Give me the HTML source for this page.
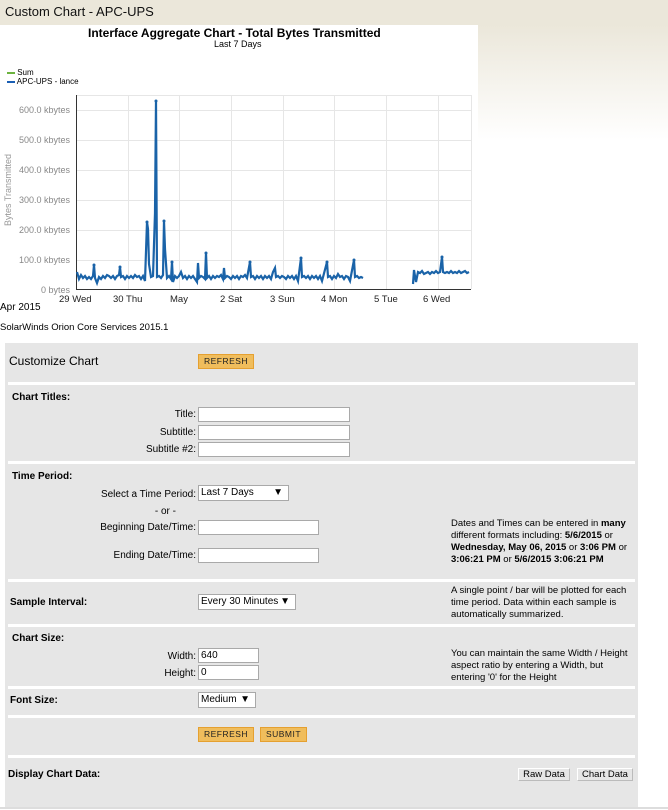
<!DOCTYPE html>
<html><head><meta charset="utf-8"><style>
*{margin:0;padding:0;box-sizing:border-box}
body{width:668px;height:810px;position:relative;font-family:"Liberation Sans",Arial,sans-serif;font-size:10px;color:#000;background:#fff;overflow:hidden}
.bg{position:absolute;left:0;top:0;width:668px;height:145px;background:linear-gradient(#ebe7da,#ebe7da 25px,#fff 140px)}
.hdr{position:absolute;left:5px;top:4px;font-size:13px;color:#111}
.chart{position:absolute;left:0;top:25px;width:478px;height:270px;background:#fff}
.a{position:absolute;white-space:nowrap}
.panel{position:absolute;left:5px;top:343px;width:633px;height:464px;background:#e6e6e6}
.sep{position:absolute;left:3px;width:627px;height:3px;background:#fff}
.in{position:absolute;height:15px;background:#fff;border:1px solid #a9a9a9;font-size:10px;padding-left:2px;line-height:13px}
.btn{position:absolute;height:15px;background:#f0bd5c;border:1px solid #e5a030;font-size:8.5px;letter-spacing:.5px;text-align:center;line-height:13px;color:#222}
.lab{position:absolute;text-align:right;width:188px;left:3px}
.b{font-weight:bold}
.gb{position:absolute;height:13px;background:#e6e6e6;border:1px solid #bbb;border-top-color:#fff;border-left-color:#fff;font-size:9.5px;text-align:center;line-height:11px}
.txt{position:absolute;left:446px;font-size:9.5px;line-height:12px;white-space:normal;width:188px}
</style></head><body>
<div class="bg"></div>
<div class="hdr">Custom Chart - APC-UPS</div>
<div class="chart"></div>
<div class="a b" style="left:88px;top:26px;font-size:12px">Interface Aggregate Chart - Total Bytes Transmitted</div>
<div class="a" style="left:214px;top:39px;font-size:9px">Last 7 Days</div>
<div class="a" style="left:7px;top:68px;font-size:8px"><span style="display:inline-block;width:8px;height:2px;background:#6cb33f;vertical-align:middle"></span> Sum</div>
<div class="a" style="left:7px;top:77px;font-size:8px"><span style="display:inline-block;width:8px;height:2px;background:#1a5fb4;vertical-align:middle"></span> APC-UPS - lance</div>
<div class="a" style="left:-28px;top:185px;font-size:9px;color:#999;transform:rotate(-90deg)">Bytes Transmitted</div>
<svg class="a" style="left:0;top:0" width="480" height="310">
<g stroke="#e6e6e6" stroke-width="1">
<line x1="76" y1="110.5" x2="471" y2="110.5"/><line x1="76" y1="140.5" x2="471" y2="140.5"/><line x1="76" y1="170.5" x2="471" y2="170.5"/><line x1="76" y1="200.5" x2="471" y2="200.5"/><line x1="76" y1="230.5" x2="471" y2="230.5"/><line x1="76" y1="260.5" x2="471" y2="260.5"/>
<line x1="76" y1="95.5" x2="471" y2="95.5"/>
<line x1="128.5" y1="95" x2="128.5" y2="289"/><line x1="179.5" y1="95" x2="179.5" y2="289"/><line x1="231.5" y1="95" x2="231.5" y2="289"/><line x1="283.5" y1="95" x2="283.5" y2="289"/><line x1="334.5" y1="95" x2="334.5" y2="289"/><line x1="386.5" y1="95" x2="386.5" y2="289"/><line x1="438.5" y1="95" x2="438.5" y2="289"/><line x1="471.5" y1="95" x2="471.5" y2="289"/>
</g>
<line x1="76.5" y1="95" x2="76.5" y2="290" stroke="#333"/>
<line x1="76" y1="289.5" x2="471" y2="289.5" stroke="#333"/>
<g font-size="9" fill="#888" text-anchor="end" font-family="Liberation Sans,Arial,sans-serif">
<text x="70" y="113">600.0 kbytes</text><text x="70" y="143">500.0 kbytes</text><text x="70" y="173">400.0 kbytes</text><text x="70" y="203">300.0 kbytes</text><text x="70" y="233">200.0 kbytes</text><text x="70" y="263">100.0 kbytes</text><text x="70" y="293">0 bytes</text>
</g>
<g font-size="9.5" fill="#222" font-family="Liberation Sans,Arial,sans-serif">
<text x="59" y="302">29 Wed</text><text x="113" y="302">30 Thu</text><text x="170" y="302">May</text><text x="220" y="302">2 Sat</text><text x="270" y="302">3 Sun</text><text x="321" y="302">4 Mon</text><text x="374" y="302">5 Tue</text><text x="423" y="302">6 Wed</text>
</g>
<polyline fill="none" stroke="#1a63a8" stroke-width="2.2" points="77,272 79,279 81,275 83,278 85,276 87,279 89,277 91,279 93,276 94,265 95,278 97,283 99,277 101,279 103,276 105,278 107,275 109,276 111,278 113,276 115,279 117,276 119,275 120,267 121,277 123,276 125,279 127,276 129,278 131,276 133,278 135,275 137,277 139,276 141,279 143,276 145,281 147,222 148,229 149,264 151,277 153,276 155,213 156,101 157,277 159,276 161,278 163,275 164,221 165,249 167,278 169,276 171,279 172,262 173,282 175,276 177,278 179,276 181,272 183,278 185,276 187,279 189,276 191,278 193,276 195,279 197,282 198,263 199,278 201,276 203,277 205,279 206,253 207,278 209,276 211,279 213,276 215,278 217,276 219,277 221,275 223,279 224,268 225,278 227,276 229,277 231,279 233,276 235,278 237,276 239,279 241,276 243,277 245,275 247,278 250,262 251,277 253,276 255,279 257,276 259,278 261,276 263,279 265,276 267,278 269,276 271,279 273,272 275,268 276,277 278,276 280,278 282,276 284,277 286,279 288,276 290,278 292,276 294,279 296,276 298,281 301,258 302,277 304,276 306,278 308,276 310,279 312,276 314,278 316,276 318,279 320,276 322,281 327,262 328,277 330,276 332,279 334,276 336,278 338,274 340,277 342,276 344,279 346,276 348,277 350,281 354,260 355,277 357,276 359,278 361,277 363,278"/>
<polyline fill="none" stroke="#1a63a8" stroke-width="2.2" points="413,284 414,270 416,282 418,272 420,273 422,271 424,274 426,273 428,272 430,274 432,272 434,273 436,271 438,273 440,272 442,257 443,272 445,273 447,272 449,273 451,271 453,273 455,272 457,273 459,271 461,273 463,272 465,271 467,273 469,272"/>
<g fill="#1a63a8"><circle cx="94" cy="265" r="1.5"/><circle cx="120" cy="267" r="1.5"/><circle cx="147" cy="222" r="1.5"/><circle cx="156" cy="101" r="1.5"/><circle cx="164" cy="221" r="1.5"/><circle cx="172" cy="262" r="1.5"/><circle cx="206" cy="253" r="1.5"/><circle cx="250" cy="262" r="1.5"/><circle cx="301" cy="258" r="1.5"/><circle cx="327" cy="262" r="1.5"/><circle cx="354" cy="260" r="1.5"/><circle cx="442" cy="257" r="1.5"/></g>
</svg>
<div class="a" style="left:0;top:302px;font-size:10px">Apr 2015</div>
<div class="a" style="left:0;top:322px;font-size:9.5px">SolarWinds Orion Core Services 2015.1</div>

<div class="panel">
<div class="a" style="left:4px;top:11px;font-size:12px">Customize Chart</div>
<div class="btn" style="left:193px;top:11px;width:56px">REFRESH</div>
<div class="sep" style="top:39px"></div>
<div class="a b" style="left:7px;top:49px">Chart Titles:</div>
<div class="lab" style="top:66px">Title:</div><div class="in" style="left:193px;top:64px;width:152px"></div>
<div class="lab" style="top:84px">Subtitle:</div><div class="in" style="left:193px;top:82px;width:152px"></div>
<div class="lab" style="top:101px">Subtitle #2:</div><div class="in" style="left:193px;top:99px;width:152px"></div>
<div class="sep" style="top:118px"></div>
<div class="a b" style="left:7px;top:128px">Time Period:</div>
<div class="lab" style="top:146px">Select a Time Period:</div><div class="in" style="left:193px;top:142px;width:91px;height:16px">Last 7 Days<span style="position:absolute;right:5px">▼</span></div>
<div class="lab" style="top:163px;width:168px">- or -</div>
<div class="lab" style="top:179px">Beginning Date/Time:</div><div class="in" style="left:193px;top:177px;width:121px"></div>
<div class="lab" style="top:207px">Ending Date/Time:</div><div class="in" style="left:193px;top:205px;width:121px"></div>
<div class="txt" style="top:175px">Dates and Times can be entered in <b>many</b> different formats including: <b>5/6/2015</b> or <b>Wednesday, May 06, 2015</b> or <b>3:06 PM</b> or <b>3:06:21 PM</b> or <b>5/6/2015 3:06:21 PM</b></div>
<div class="sep" style="top:236px"></div>
<div class="a b" style="left:5px;top:254px">Sample Interval:</div>
<div class="in" style="left:193px;top:251px;width:98px;height:16px">Every 30 Minutes<span style="position:absolute;right:5px">▼</span></div>
<div class="txt" style="top:242px">A single point / bar will be plotted for each time period. Data within each sample is automatically summarized.</div>
<div class="sep" style="top:281px"></div>
<div class="a b" style="left:7px;top:290px">Chart Size:</div>
<div class="lab" style="top:308px">Width:</div><div class="in" style="left:193px;top:305px;width:61px">640</div>
<div class="lab" style="top:325px">Height:</div><div class="in" style="left:193px;top:322px;width:61px">0</div>
<div class="txt" style="top:305px">You can maintain the same Width / Height aspect ratio by entering a Width, but entering '0' for the Height</div>
<div class="sep" style="top:343px"></div>
<div class="a b" style="left:5px;top:352px">Font Size:</div>
<div class="in" style="left:193px;top:349px;width:58px;height:16px">Medium<span style="position:absolute;right:5px">▼</span></div>
<div class="sep" style="top:372px"></div>
<div class="btn" style="left:193px;top:384px;width:56px">REFRESH</div>
<div class="btn" style="left:255px;top:384px;width:47px">SUBMIT</div>
<div class="sep" style="top:412px"></div>
<div class="a b" style="left:3px;top:426px">Display Chart Data:</div>
<div class="gb" style="left:513px;top:425px;width:52px">Raw Data</div>
<div class="gb" style="left:572px;top:425px;width:56px">Chart Data</div>
</div>
<div class="a" style="left:0;top:807px;width:668px;height:2px;background:#ddd"></div>
</body></html>
